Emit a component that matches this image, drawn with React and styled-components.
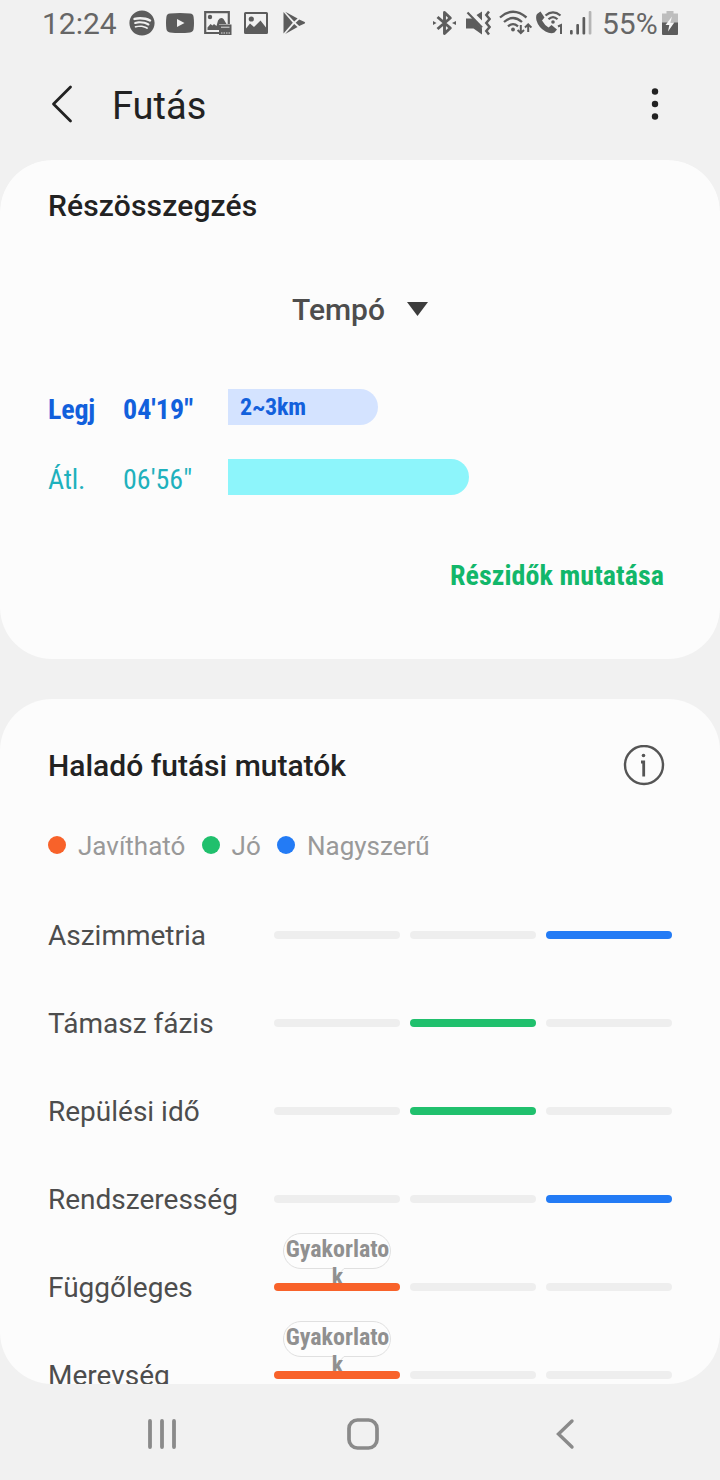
import React from "react";
import styled, { createGlobalStyle } from "styled-components";
import { FaSpotify } from "react-icons/fa";

const Global = createGlobalStyle`
  * { box-sizing: border-box; }
  body { margin: 0; background: #f1f1f1; font-family: Roboto, "Liberation Sans", sans-serif; }
`;

const Screen = styled.div`
  width: 720px;
  height: 1480px;
  display: flex;
  flex-direction: column;
  background: #f1f1f1;
  overflow: hidden;
`;

const StatusBar = styled.header`
  height: 48px;
  padding: 0 42px 2px 42px;
  display: flex;
  align-items: center;
  justify-content: space-between;
  color: #5c5c5c;
`;

const StatusGroup = styled.div`
  display: flex;
  align-items: center;
`;

const StatusItem = styled.span`
  flex: none;
  margin-left: ${(p) => p.$before || 0}px;
  svg { display: block; }
`;

const StatusText = styled.span`
  margin-left: ${(p) => p.$before || 0}px;
  padding-top: 1px;
  font-size: 30px;
  line-height: 46px;
  white-space: nowrap;
  width: ${(p) => p.$width}px;
  color: #666;
`;

const AppBar = styled.div`
  height: 112px;
  padding: 0 44px 0 42px;
  display: flex;
  align-items: center;
  svg { display: block; }
`;

const Title = styled.h1`
  flex: 1;
  margin: 4px 0 0 30px;
  font-size: 38px;
  line-height: 48px;
  font-weight: 400;
  color: #222;
`;

const Scroll = styled.main`
  height: 1224px;
  flex: none;
  overflow: hidden;
  border-radius: 52px;
  display: flex;
  flex-direction: column;
  gap: 40px;
`;

const Card = styled.section`
  flex: none;
  height: ${(p) => p.$height || "auto"};
  padding: ${(p) => p.$pad};
  background: #fcfcfc;
  border-radius: 52px;
`;

const Heading = styled.h2`
  margin: 0;
  font-size: 30px;
  line-height: 52px;
  font-weight: 500;
  letter-spacing: ${(p) => p.$track || 0}px;
  color: #222;
`;

const Picker = styled.div`
  margin-top: 51px;
  height: 52px;
  display: flex;
  align-items: center;
  justify-content: center;
  gap: 22px;
  font-size: 30px;
  font-weight: 500;
  color: #4d4d4d;
  svg { display: block; margin-top: -1px; }
`;

const Paces = styled.div`
  margin-top: 37px;
`;

const PaceRow = styled.div`
  height: 70px;
  display: grid;
  grid-template-columns: 75px 105px 1fr;
  align-items: center;
  color: ${(p) => p.$color};
  font-weight: ${(p) => p.$weight};
`;

const Condensed = styled.span`
  display: block;
  width: max-content;
  font-family: "Roboto Condensed", Roboto, sans-serif;
  font-stretch: 75%;
  font-size: ${(p) => p.$size || 28}px;
  letter-spacing: ${(p) => p.$track || 0}px;
  line-height: 36px;
  margin-top: 6px;
`;

const PaceBar = styled.div`
  height: 36px;
  width: ${(p) => p.$width}px;
  padding-left: 12px;
  margin-bottom: 1px;
  background: ${(p) => p.$fill};
  border-radius: 0 18px 18px 0;
  display: flex;
  align-items: center;
  span { margin-top: 0; }
`;

const LinkRow = styled.div`
  margin-top: 40px;
  padding-right: 8px;
  display: flex;
  justify-content: flex-end;
  font-weight: 700;
  color: #12b76a;
`;

const HeadRow = styled.div`
  display: flex;
  align-items: center;
  justify-content: space-between;
  padding-right: 7px;
  svg { display: block; }
`;

const Legend = styled.div`
  margin: 28px 0 19px;
  height: 52px;
  display: flex;
  align-items: center;
  font-size: 26px;
  color: #999;
`;

const LegendItem = styled.div`
  display: flex;
  align-items: center;
  gap: 12px;
  margin-right: 16.200px;
`;

const Dot = styled.i`
  width: 18px;
  height: 18px;
  margin-top: -2px;
  border-radius: 50%;
  background: ${(p) => p.$color};
`;

const MetricRow = styled.div`
  height: 88px;
  display: grid;
  grid-template-columns: 226px repeat(3, 126px);
  align-items: center;
  font-size: 28px;
  color: #4d4d4d;
`;

const Label = styled.span`
  white-space: nowrap;
`;

const Slot = styled.div`
  position: relative;
  width: 126px;
  height: 8px;
  margin-left: ${(p) => p.$shift}px;
`;

const Segment = styled.div`
  position: relative;
  height: 8px;
  border-radius: 4px;
  background: ${(p) => p.$color};
`;

const Bubble = styled.div`
  position: absolute;
  left: 9px;
  top: -50px;
  width: 109px;
  height: 58px;
  color: #909090;
  font-family: "Roboto Condensed", Roboto, sans-serif;
  font-stretch: 75%;
  font-size: 24px;
  font-weight: 700;
  line-height: 28px;
  text-align: center;
  svg { position: absolute; left: 0; top: 0; }
  span { position: relative; display: block; margin-top: 2px; white-space: pre; }
`;

const NavBar = styled.nav`
  flex: 1;
  padding: 4px 145px 0 147px;
  display: grid;
  grid-template-columns: 200px 1fr 20px;
  align-items: center;
  svg { display: block; }
`;

const GREEN = "#20c06d";
const BLUE = "#237bf5";
const ORANGE = "#f8622a";
const LEVELS = [ORANGE, GREEN, BLUE];
const LEGEND = ["Javítható", "Jó", "Nagyszerű"];
const METRICS = [
  { label: "Aszimmetria", level: 2 },
  { label: "Támasz fázis", level: 1 },
  { label: "Repülési idő", level: 1 },
  { label: "Rendszeresség", level: 2 },
  { label: "Függőleges", level: 0, tip: true },
  { label: "Merevség", level: 0, tip: true },
];

const YouTubeIcon = () => (
  <svg width="28" height="20" viewBox="0 0 28 20">
    <path fill="currentColor" fillRule="evenodd" d="M4 .6Q14-.5 24 .6Q27.300 1 27.600 4Q28.400 10 27.600 16Q27.300 19 24 19.400Q14 20.500 4 19.400Q.7 19 .4 16Q-.4 10 .4 4Q.7 1 4 .6ZM11 6V14L18.500 10Z" />
  </svg>
);

const FilmPictureIcon = () => (
  <svg width="28" height="24" viewBox="0 0 28 24">
    <path d="M15 22H1.200V1.200H24.800V13" fill="none" stroke="currentColor" strokeWidth="2.200" />
    <circle cx="6" cy="6" r="2.200" fill="currentColor" />
    <path fill="currentColor" d="M3.500 19V16.500L6.500 13L8.500 14.500L10 13L12.500 15L14 9.500Q16.800 5.500 19.500 8L22.500 13H15V19Z" />
    <rect x="15" y="13.500" width="12.500" height="10.500" fill="currentColor" />
    <rect x="17" y="15.700" width="8.500" height="1" fill="#ddd" />
    <path d="M17 22H26" stroke="#ddd" strokeWidth="1.200" strokeDasharray="1.500 1" />
  </svg>
);

const PictureIcon = () => (
  <svg width="24" height="22" viewBox="0 0 24 22">
    <path fill="currentColor" fillRule="evenodd" d="M1.500 0H22.500Q24 0 24 1.500V20.500Q24 22 22.500 22H1.500Q0 22 0 20.500V1.500Q0 0 1.500 0ZM2 2V16.500L6 11.500L10 15L16.500 8.500L22 15.500V2Z" />
    <circle cx="7.300" cy="7" r="2.600" fill="currentColor" />
  </svg>
);

const PlayStoreIcon = () => (
  <svg width="23" height="24" viewBox="0 0 23 24" fill="currentColor">
    <path d="M.5 1L9.800 11.800L.5 22.500Z" />
    <path d="M2.200.8L14.600 7.600L11.200 10.600Z" />
    <path d="M2.200 22.900L14.600 15.900L11.200 13Z" />
    <path d="M16.200 8.600L21.700 11Q22.600 11.800 21.700 12.600L16.200 15L12.700 11.800Z" />
  </svg>
);

const BluetoothIcon = () => (
  <svg width="23" height="26" viewBox="0 0 23 26">
    <path d="M4.500 7L17.300 18L11.500 23.500V2.500L17.300 8L4.500 19" fill="none" stroke="currentColor" strokeWidth="2.900" strokeLinejoin="round" />
    <path d="M0 11L3.500 13L0 15ZM23 11L19 13L23 15Z" fill="currentColor" />
  </svg>
);

const VibrateIcon = () => (
  <svg width="25" height="26" viewBox="0 0 25 26">
    <path fill="currentColor" d="M0 8.500H6.500L16 18.500V24.500L7.500 18.500H0ZM10.500 5L16 1.500V10.500Z" />
    <path d="M1.500 2.500L16 17.500" stroke="currentColor" strokeWidth="2.200" />
    <path d="M23 1.500L20.300 5L23.600 9L20.300 13L23.600 17L20.300 21L23 24.500" fill="none" stroke="currentColor" strokeWidth="2.500" />
  </svg>
);

const WifiIcon = () => (
  <svg width="33" height="26" viewBox="0 0 33 26" fill="none" stroke="currentColor" strokeWidth="2.300">
    <path d="M1 7.500Q14-4 27.500 7.500M5 12Q14 4 23 12M9 16.300Q14 12 19 16.300" />
    <circle cx="14" cy="19.500" r="1.900" fill="currentColor" stroke="none" />
    <path d="M21.800 15V23M18.600 20L21.800 23.200L25 20M29.200 22V14.500M26 17.500L29.200 14.300L32.400 17.500" strokeWidth="2" />
  </svg>
);

const CallIcon = () => (
  <svg width="27" height="26" viewBox="0 0 27 26" fill="none" stroke="currentColor">
    <path stroke="none" fill="currentColor" d="M1 4L4.500 1.500L8.500 7.500L6 10.500Q8.500 15 12.500 17.500L15.500 15L21 19.500L18.500 22.500Q15 24.500 9.500 21.500Q2.500 17.500 .5 10.500Q-.5 6 1 4Z" />
    <path d="M9.500 5.500Q17-.8 24.500 5.500M12.500 9.300Q17 5 21.500 9.300" strokeWidth="2.200" />
    <circle cx="17" cy="12" r="1.800" fill="currentColor" stroke="none" />
    <path d="M22 16.500L25 15V24" strokeWidth="2" />
  </svg>
);

const SignalIcon = () => (
  <svg width="22" height="24" viewBox="0 0 22 24" fill="currentColor">
    <rect x="0" y="19" width="2.700" height="4.500" rx="1" />
    <rect x="6.300" y="13" width="2.700" height="10.500" rx="1" />
    <rect x="12.500" y="6" width="2.700" height="17.500" rx="1" />
    <rect x="18.700" y="0" width="2.700" height="23.500" rx="1" fill="#b5b5b5" />
  </svg>
);

const BatteryIcon = () => (
  <svg width="16" height="24" viewBox="0 0 16 24">
    <path fill="#bdbdbd" d="M4.500 0H11.500V2.500H16V12H0V2.500H4.500Z" />
    <path fill="currentColor" d="M0 11.500H16V23Q16 24 15 24H1Q0 24 0 23Z" />
    <path fill="#f5f5f5" d="M10 5.500L3.500 14H7.300L6 20.500L12.300 11.500H8.400Z" />
  </svg>
);

const BubbleShape = () => (
  <svg width="108" height="46" viewBox="0 0 108 46">
    <path d="M18 .5H90A17.500 17.500 0 0 1 90 35.500H61L54 43L50 35.500H18A17.500 17.500 0 0 1 18 .5Z" fill="#fdfdfd" stroke="#e0e0e0" />
  </svg>
);

const Metric = ({ label, level, tip }) => (
  <MetricRow>
    <Label>{label}</Label>
    {LEVELS.map((color, i) => (
      <Slot key={color} $shift={i * 10}>
        {tip && i === level && (
          <Bubble>
            <BubbleShape />
            <span>{"Gyakorlato\nk"}</span>
          </Bubble>
        )}
        <Segment $color={i === level ? color : "#eeeeee"} />
      </Slot>
    ))}
  </MetricRow>
);

export default function App() {
  return (
    <Screen>
      <Global />
      <StatusBar>
        <StatusGroup>
          <StatusText $width={76}>12:24</StatusText>
          <StatusItem $before={11}><FaSpotify size={26} /></StatusItem>
          <StatusItem $before={11}><YouTubeIcon /></StatusItem>
          <StatusItem $before={10}><FilmPictureIcon /></StatusItem>
          <StatusItem $before={12}><PictureIcon /></StatusItem>
          <StatusItem $before={15}><PlayStoreIcon /></StatusItem>
        </StatusGroup>
        <StatusGroup>
          <StatusItem><BluetoothIcon /></StatusItem>
          <StatusItem $before={10}><VibrateIcon /></StatusItem>
          <StatusItem $before={8}><WifiIcon /></StatusItem>
          <StatusItem $before={4}><CallIcon /></StatusItem>
          <StatusItem $before={7}><SignalIcon /></StatusItem>
          <StatusText $before={10} $width={60}>55%</StatusText>
          <StatusItem><BatteryIcon /></StatusItem>
        </StatusGroup>
      </StatusBar>
      <AppBar>
        <svg width="40" height="40" viewBox="0 0 40 40">
          <path d="M28.500 3L11.500 20L28.500 37" fill="none" stroke="#222" strokeWidth="2.800" strokeLinecap="round" strokeLinejoin="round" />
        </svg>
        <Title>Futás</Title>
        <svg width="42" height="40" viewBox="0 0 42 40" fill="#222">
          <circle cx="21" cy="7.500" r="3.200" />
          <circle cx="21" cy="20" r="3.200" />
          <circle cx="21" cy="32.500" r="3.200" />
        </svg>
      </AppBar>
      <Scroll>
        <Card $height="499px" $pad="20px 48px">
          <Heading $track={0.15}>Részösszegzés</Heading>
          <Picker>
            Tempó
            <svg width="21" height="14" viewBox="0 0 21 14">
              <path d="M0 0H21L10.500 14Z" fill="#3c3c3c" />
            </svg>
          </Picker>
          <Paces>
            <PaceRow $color="#1260dc" $weight={700}>
              <Condensed $track={-0.2}>Legj</Condensed>
              <Condensed>04'19"</Condensed>
              <PaceBar $width={150} $fill="#d4e3ff">
                <Condensed $size={24} $track={-0.2}>2~3km</Condensed>
              </PaceBar>
            </PaceRow>
            <PaceRow $color="#1fb1bd" $weight={400}>
              <Condensed $track={-0.2}>Átl.</Condensed>
              <Condensed>06'56"</Condensed>
              <PaceBar $width={241} $fill="#8df5fb" />
            </PaceRow>
          </Paces>
          <LinkRow>
            <Condensed $track={0.06}>Részidők mutatása</Condensed>
          </LinkRow>
        </Card>
        <Card $pad="41px 48px 40px">
          <HeadRow>
            <Heading>Haladó futási mutatók</Heading>
            <svg width="42" height="42" viewBox="0 0 42 42" fill="none" stroke="#555" strokeWidth="2.400">
              <circle cx="21" cy="20" r="19" />
              <path d="M18 17H20.700V31.500" strokeWidth="2.800" />
              <circle cx="20.500" cy="10.500" r="1.800" fill="#555" stroke="none" />
            </svg>
          </HeadRow>
          <Legend>
            {LEGEND.map((name, i) => (
              <LegendItem key={name}>
                <Dot $color={LEVELS[i]} />
                {name}
              </LegendItem>
            ))}
          </Legend>
          {METRICS.map((m) => (
            <Metric key={m.label} {...m} />
          ))}
        </Card>
      </Scroll>
      <NavBar>
        <svg width="30" height="32" viewBox="0 0 30 32" stroke="#8a8a8a" strokeWidth="3.800" strokeLinecap="round">
          <path d="M3 3V29M15 3V29M27 3V29" />
        </svg>
        <svg width="32" height="32" viewBox="0 0 32 32">
          <rect x="2" y="2" width="28" height="28" rx="8.500" fill="none" stroke="#8a8a8a" strokeWidth="3.700" />
        </svg>
        <svg width="20" height="32" viewBox="0 0 20 32">
          <path d="M17 3L3.500 16L17 29" fill="none" stroke="#8a8a8a" strokeWidth="3.400" strokeLinecap="round" />
        </svg>
      </NavBar>
    </Screen>
  );
}
